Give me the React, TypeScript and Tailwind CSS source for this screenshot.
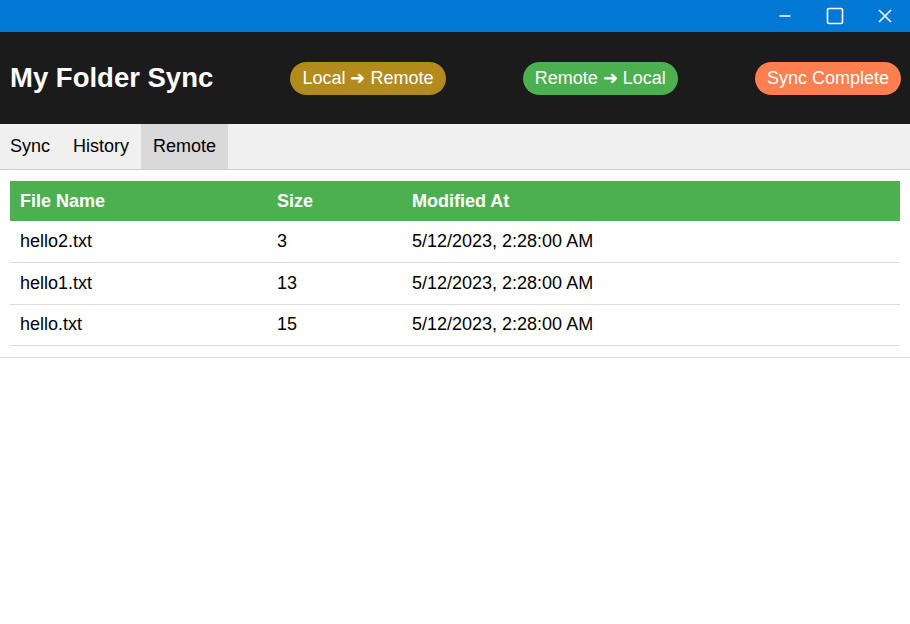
import React from 'react';

const files = [
  { name: 'hello2.txt', size: 3, modified: '5/12/2023, 2:28:00 AM' },
  { name: 'hello1.txt', size: 13, modified: '5/12/2023, 2:28:00 AM' },
  { name: 'hello.txt', size: 15, modified: '5/12/2023, 2:28:00 AM' },
];

const tabs = ['Sync', 'History', 'Remote'];

const App: React.FC = () => {
  return (
    <div className="flex h-[624px] w-[910px] flex-col bg-white font-['Liberation_Sans',Arial,sans-serif] text-black">
      {/* window title bar */}
      <div className="flex h-8 items-center justify-end bg-[#0078d4] text-white">
        <button type="button" className="flex h-8 w-[50px] items-center justify-center">
          <svg width="12" height="12" viewBox="0 0 12 12">
            <path d="M0.5 6h11" stroke="white" strokeWidth="1.5" />
          </svg>
        </button>
        <button type="button" className="flex h-8 w-[50px] items-center justify-center">
          <svg width="18" height="18" viewBox="0 0 18 18">
            <rect x="1.5" y="1.5" width="15" height="15" rx="1.5" fill="none" stroke="white" strokeWidth="1.6" />
          </svg>
        </button>
        <button type="button" className="flex h-8 w-[50px] items-center justify-center">
          <svg width="14" height="14" viewBox="0 0 14 14">
            <path d="M1 1l12 12M13 1L1 13" stroke="white" strokeWidth="1.6" />
          </svg>
        </button>
      </div>

      {/* header */}
      <div className="flex h-[92px] items-center justify-between bg-[#1b1b1b] pl-[10px] pr-[9px]">
        <h1 className="text-[27.5px] font-bold text-white">My Folder Sync</h1>
        <button type="button" className="h-[33px] rounded-full bg-[#b28b1c] px-3 text-[18px] text-white">
          Local ➜ Remote
        </button>
        <button type="button" className="h-[33px] rounded-full bg-[#4caf50] px-3 text-[18px] text-white">
          Remote ➜ Local
        </button>
        <button type="button" className="h-[33px] rounded-full bg-[#ff7f50] px-3 text-[18px] text-white">
          Sync Complete
        </button>
      </div>

      {/* tabs */}
      <div className="flex h-[46px] border-b border-[#cccccc] bg-[#f0f0f0]">
        {tabs.map((tab, i) => (
          <button
            key={tab}
            type="button"
            className={`h-[45px] text-[18px] ${i === 0 ? 'pl-[10px] pr-[11px]' : 'px-[12px]'} ${tab === 'Remote' ? 'bg-[#d9d9d9]' : ''}`}
          >
            {tab}
          </button>
        ))}
      </div>

      {/* content */}
      <div className="border-b border-[#dddddd] px-[10px] pb-[11px] pt-[11px]">
        <table className="w-full border-collapse text-left text-[18px]">
          <thead>
            <tr className="h-10 bg-[#4caf50] text-white">
              <th className="w-[257px] px-[10px] font-bold">File Name</th>
              <th className="w-[135px] px-[10px] font-bold">Size</th>
              <th className="px-[10px] font-bold">Modified At</th>
            </tr>
          </thead>
          <tbody>
            {files.map((f) => (
              <tr key={f.name} className="h-[41.5px] border-b border-[#dddddd]">
                <td className="px-[10px]">{f.name}</td>
                <td className="px-[10px]">{f.size}</td>
                <td className="px-[10px]">{f.modified}</td>
              </tr>
            ))}
          </tbody>
        </table>
      </div>
    </div>
  );
};

export default App;
